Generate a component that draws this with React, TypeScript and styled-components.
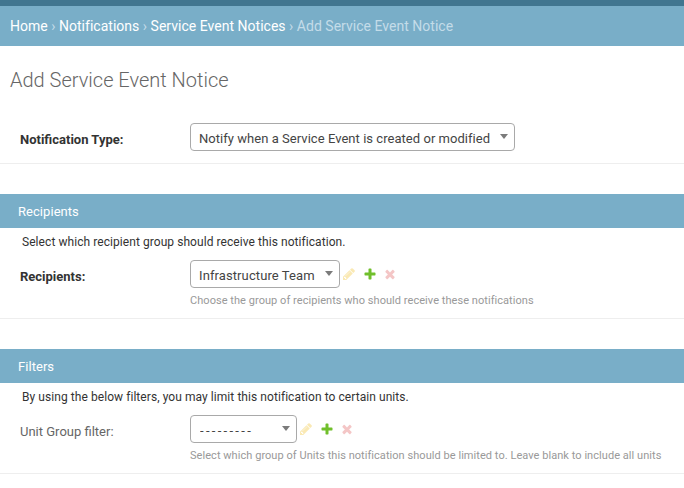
import React from 'react'
import styled, { createGlobalStyle } from 'styled-components';

const GlobalStyle = createGlobalStyle`
   html, body {
      margin: 0;
      padding: 0;
      background: #fff;
      font-family: Roboto, "Liberation Sans", sans-serif;
      color: #333;
      overflow: hidden;
   }
`;

const Breadcrumbs = styled.div`
   border-top: 6px solid #417690;
   background: #79aec8;
   height: 40px;
   padding: 0 10px;
   display: flex;
   align-items: center;
   font-size: 14px;
   letter-spacing: 0.02px;
   color: #c4dce8;
   white-space: nowrap;
   a {
      color: #fff;
      text-decoration: none;
   }
`;

const Content = styled.div`
   padding: 20px 0 0 10px;
`;

const Title = styled.h1`
   margin: 0 0 29px;
   font-weight: 300;
   font-size: 20px;
   line-height: 28px;
   color: #666;
`;

const Fieldset = styled.fieldset`
   margin: 0 0 30px -10px;
   padding: 0;
   border: none;
   min-width: 0;
`;

const SectionTitle = styled.h2`
   margin: 0;
   padding: 0 18px;
   height: 34px;
   display: flex;
   align-items: center;
   background: #79aec8;
   color: #fff;
   font-size: 13px;
   font-weight: 400;
   letter-spacing: 0.05px;
`;

const Description = styled.div`
   padding: 0 22px;
   height: 27px;
   margin-bottom: 5px;
   display: flex;
   align-items: center;
   font-size: 12px;
   letter-spacing: 0.065px;
   color: #333;
`;

const Row = styled.div<{ $first?: boolean }>`
   display: flex;
   align-items: flex-start;
   padding: ${p => (p.$first ? '0 0 12px 20px' : '0 0 9px 20px')};
   border-bottom: 1px solid #eee;
`;

const Label = styled.label<{ $required?: boolean }>`
   width: 170px;
   flex: none;
   padding-top: 9px;
   line-height: 16px;
   font-size: 13px;
   font-weight: ${p => (p.$required ? 700 : 400)};
   color: ${p => (p.$required ? '#333' : '#666')};
`;

const Field = styled.div`
   display: flex;
   flex-direction: column;
`;

const Controls = styled.div`
   display: flex;
   align-items: center;
`;

const SelectWrap = styled.div<{ $width: number }>`
   position: relative;
   width: ${p => p.$width}px;
   height: 28px;
   &:after {
      content: "";
      position: absolute;
      right: 7px;
      top: 11px;
      border-left: 4.5px solid transparent;
      border-right: 4.5px solid transparent;
      border-top: 5px solid #7b7b7b;
      pointer-events: none;
   }
`;

const Select = styled.select<{ $spacing: number; $indent?: number }>`
   appearance: none;
   width: 100%;
   height: 100%;
   box-sizing: border-box;
   margin: 0;
   padding: 2px 16px 0 ${p => p.$indent ?? 8}px;
   border: 1px solid #a9a9a9;
   border-radius: 4px;
   background: #fff;
   font-family: Roboto, "Liberation Sans", sans-serif;
   font-size: 13px;
   letter-spacing: ${p => p.$spacing}px;
   color: #444;
`;

const Icons = styled.div`
   display: flex;
   align-items: center;
   gap: 6.5px;
   margin-left: 2px;
`;

const Icon = styled.svg<{ $faded?: boolean }>`
   width: 14px;
   height: 14px;
   display: block;
   opacity: ${p => (p.$faded ? 0.3 : 1)};
`;

const Help = styled.div`
   margin-top: 5px;
   line-height: 16px;
   font-size: 11px;
   letter-spacing: 0.05px;
   color: #999;
   white-space: nowrap;
`;

const Pencil = () => (
   <Icon viewBox="0 0 1792 1792" $faded>
      <path fill="#efb80b" d="M491 1536l91-91-235-235-91 91v107h128v128h107zm523-928q0-22-22-22-10 0-17 7l-542 542q-7 7-7 17 0 22 22 22 10 0 17-7l542-542q7-7 7-17zm-54-192l416 416-832 832h-416v-416zm683 96q0 53-37 90l-166 166-416-416 166-165q36-38 90-38 53 0 91 38l235 234q37 39 37 91z" />
   </Icon>
);

const Plus = () => (
   <Icon viewBox="0 0 1792 1792">
      <path fill="#70bf2b" d="M1600 796v192q0 40-28 68t-68 28h-416v416q0 40-28 68t-68 28h-192q-40 0-68-28t-28-68v-416h-416q-40 0-68-28t-28-68v-192q0-40 28-68t68-28h416v-416q0-40 28-68t68-28h192q40 0 68 28t28 68v416h416q40 0 68 28t28 68z" />
   </Icon>
);

const Cross = () => (
   <Icon viewBox="0 0 1792 1792" $faded>
      <path fill="#dd4646" d="M1490 1322q0 40-28 68l-136 136q-28 28-68 28t-68-28l-294-294-294 294q-28 28-68 28t-68-28l-136-136q-28-28-28-68t28-68l294-294-294-294q-28-28-28-68t28-68l136-136q28-28 68-28t68 28l294 294 294-294q28-28 68-28t68 28l136 136q28 28 28 68t-28 68l-294 294 294 294q28 28 28 68z" />
   </Icon>
);

const RelatedIcons = () => (
   <Icons>
      <Pencil />
      <Plus />
      <Cross />
   </Icons>
);

const App = () => {
   return (
      <>
         <GlobalStyle />
         <Breadcrumbs>
            <a href="#">Home</a>&nbsp;›&nbsp;<a href="#">Notifications</a>&nbsp;›&nbsp;<a href="#">Service Event Notices</a>&nbsp;›&nbsp;Add Service Event Notice
         </Breadcrumbs>
         <Content>
            <Title>Add Service Event Notice</Title>
            <Fieldset>
               <Row $first>
                  <Label $required>Notification Type:</Label>
                  <Field>
                     <SelectWrap $width={325}>
                        <Select $spacing={0.04} defaultValue="a">
                           <option value="a">Notify when a Service Event is created or modified</option>
                        </Select>
                     </SelectWrap>
                  </Field>
               </Row>
            </Fieldset>
            <Fieldset>
               <SectionTitle>Recipients</SectionTitle>
               <Description>Select which recipient group should receive this notification.</Description>
               <Row>
                  <Label $required>Recipients:</Label>
                  <Field>
                     <Controls>
                        <SelectWrap $width={150}>
                           <Select $spacing={0.1} defaultValue="a">
                              <option value="a">Infrastructure Team</option>
                           </Select>
                        </SelectWrap>
                        <RelatedIcons />
                     </Controls>
                     <Help>Choose the group of recipients who should receive these notifications</Help>
                  </Field>
               </Row>
            </Fieldset>
            <Fieldset>
               <SectionTitle>Filters</SectionTitle>
               <Description>By using the below filters, you may limit this notification to certain units.</Description>
               <Row>
                  <Label>Unit Group filter:</Label>
                  <Field>
                     <Controls>
                        <SelectWrap $width={107}>
                           <Select $spacing={2.3} $indent={9} defaultValue="a">
                              <option value="a">---------</option>
                           </Select>
                        </SelectWrap>
                        <RelatedIcons />
                     </Controls>
                     <Help>Select which group of Units this notification should be limited to. Leave blank to include all units</Help>
                  </Field>
               </Row>
            </Fieldset>
         </Content>
      </>
   );
}

export default App;
